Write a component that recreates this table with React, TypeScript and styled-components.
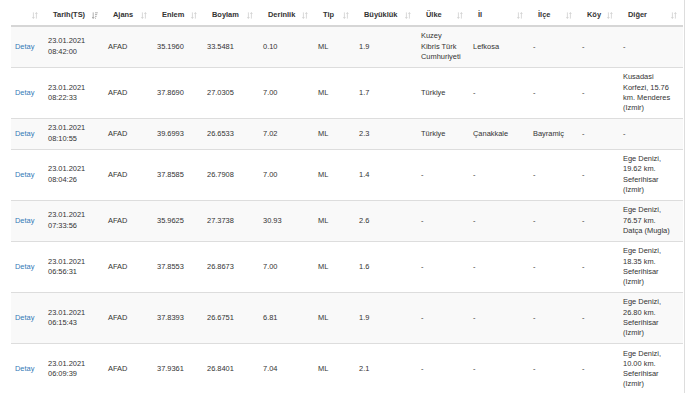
import React from 'react';
import styled, { createGlobalStyle } from 'styled-components';

const GlobalStyle = createGlobalStyle`
  html, body {
    margin: 0;
    padding: 0;
    background: #ffffff;
    overflow: hidden;
  }
  body {
    font-family: 'Liberation Sans', Arial, sans-serif;
    color: #333333;
  }
`;

const Panel = styled.div`
  box-sizing: border-box;
  width: 685px;
  height: 393px;
  padding: 6px 0 0 11px;
  border-right: 1px solid #dddddd;
  overflow: hidden;
`;

const Table = styled.table`
  width: 672px;
  table-layout: fixed;
  border-collapse: collapse;
  border-spacing: 0;
  font-size: 7.45px;
  line-height: 10.25px;
`;

const HeadCell = styled.th`
  padding: 4px 6px 4.5px 9px;
  border-bottom: 2px solid #d6d6d6;
  text-align: left;
  font-weight: bold;
  vertical-align: middle;
  white-space: nowrap;
`;

const HeadInner = styled.div`
  display: flex;
  align-items: center;
  justify-content: space-between;
  gap: 4px;
`;

const Row = styled.tr<{ $striped: boolean }>`
  background: ${(p) => (p.$striped ? '#f9f9f9' : '#ffffff')};
`;

const Cell = styled.td`
  padding: 4.6px 4px;
  border-top: 1px solid #dddddd;
  vertical-align: middle;
  white-space: nowrap;
  overflow: hidden;
`;

const DetailLink = styled.a`
  color: #337ab7;
  text-decoration: none;
`;

const SortIcon = styled.svg`
  flex: none;
  display: block;
`;

interface SortProps {
  active?: boolean;
}

const Sort: React.FC<SortProps> = ({ active }) =>
  active ? (
    <SortIcon width="6" height="7" viewBox="0 0 6 7">
      <g fill="none" stroke="#9a9a9a" strokeWidth="0.8">
        <path d="M1.2 0.4v6M0.2 5l1 1.4 1-1.4" />
        <path d="M3 0.8h2.8M3 2.6h2.2M3 4.4h1.6M3 6.2h1" />
      </g>
    </SortIcon>
  ) : (
    <SortIcon width="6" height="7" viewBox="0 0 6 7">
      <g fill="none" stroke="#cfcfcf" strokeWidth="0.8">
        <path d="M1.4 0.4v6M0.4 5l1 1.4 1-1.4" />
        <path d="M4.4 6.6v-6M3.4 2l1-1.4 1 1.4" />
      </g>
    </SortIcon>
  );

const columns: { title: string; width: number; active?: boolean }[] = [
  { title: '', width: 33 },
  { title: 'Tarih(TS)', width: 60, active: true },
  { title: 'Ajans', width: 49 },
  { title: 'Enlem', width: 50 },
  { title: 'Boylam', width: 56 },
  { title: 'Derinlik', width: 55 },
  { title: 'Tip', width: 41 },
  { title: 'Büyüklük', width: 62 },
  { title: 'Ülke', width: 52 },
  { title: 'İl', width: 60 },
  { title: 'İlçe', width: 49 },
  { title: 'Köy', width: 41 },
  { title: 'Diğer', width: 64 },
];

type Quake = {
  date: string;
  time: string;
  lat: string;
  lon: string;
  depth: string;
  mag: string;
  country: string[];
  city: string;
  town: string;
  village: string;
  other: string[];
};

const seferihisar = (km: string) => ['Ege Denizi,', `${km} km.`, 'Seferihisar', '(Izmir)'];

const quakes: Quake[] = [
  { date: '23.01.2021', time: '08:42:00', lat: '35.1960', lon: '33.5481', depth: '0.10', mag: '1.9', country: ['Kuzey', 'Kibris Türk', 'Cumhuriyeti'], city: 'Lefkosa', town: '-', village: '-', other: ['-'] },
  { date: '23.01.2021', time: '08:22:33', lat: '37.8690', lon: '27.0305', depth: '7.00', mag: '1.7', country: ['Türkiye'], city: '-', town: '-', village: '-', other: ['Kusadasi', 'Korfezi, 15.76', 'km. Menderes', '(Izmir)'] },
  { date: '23.01.2021', time: '08:10:55', lat: '39.6993', lon: '26.6533', depth: '7.02', mag: '2.3', country: ['Türkiye'], city: 'Çanakkale', town: 'Bayramiç', village: '-', other: ['-'] },
  { date: '23.01.2021', time: '08:04:26', lat: '37.8585', lon: '26.7908', depth: '7.00', mag: '1.4', country: ['-'], city: '-', town: '-', village: '-', other: seferihisar('19.62') },
  { date: '23.01.2021', time: '07:33:56', lat: '35.9625', lon: '27.3738', depth: '30.93', mag: '2.6', country: ['-'], city: '-', town: '-', village: '-', other: ['Ege Denizi,', '76.57 km.', 'Datça (Mugla)'] },
  { date: '23.01.2021', time: '06:56:31', lat: '37.8553', lon: '26.8673', depth: '7.00', mag: '1.6', country: ['-'], city: '-', town: '-', village: '-', other: seferihisar('18.35') },
  { date: '23.01.2021', time: '06:15:43', lat: '37.8393', lon: '26.6751', depth: '6.81', mag: '1.9', country: ['-'], city: '-', town: '-', village: '-', other: seferihisar('26.80') },
  { date: '23.01.2021', time: '06:09:39', lat: '37.9361', lon: '26.8401', depth: '7.04', mag: '2.1', country: ['-'], city: '-', town: '-', village: '-', other: seferihisar('10.00') },
];

const Lines: React.FC<{ lines: string[] }> = ({ lines }) => (
  <>
    {lines.map((line, i) => (
      <React.Fragment key={i}>
        {i > 0 && <br />}
        {line}
      </React.Fragment>
    ))}
  </>
);

export default function App() {
  return (
    <>
      <GlobalStyle />
      <Panel>
        <Table>
          <colgroup>
            {columns.map((c, i) => (
              <col key={i} style={{ width: c.width }} />
            ))}
          </colgroup>
          <thead>
            <tr>
              {columns.map((c, i) => (
                <HeadCell key={i}>
                  <HeadInner>
                    <span>{c.title}</span>
                    <Sort active={c.active} />
                  </HeadInner>
                </HeadCell>
              ))}
            </tr>
          </thead>
          <tbody>
            {quakes.map((q, i) => (
              <Row key={q.time} $striped={i % 2 === 0}>
                <Cell>
                  <DetailLink href="#">Detay</DetailLink>
                </Cell>
                <Cell>
                  <Lines lines={[q.date, q.time]} />
                </Cell>
                <Cell>AFAD</Cell>
                <Cell>{q.lat}</Cell>
                <Cell>{q.lon}</Cell>
                <Cell>{q.depth}</Cell>
                <Cell>ML</Cell>
                <Cell>{q.mag}</Cell>
                <Cell>
                  <Lines lines={q.country} />
                </Cell>
                <Cell>{q.city}</Cell>
                <Cell>{q.town}</Cell>
                <Cell>{q.village}</Cell>
                <Cell>
                  <Lines lines={q.other} />
                </Cell>
              </Row>
            ))}
          </tbody>
        </Table>
      </Panel>
    </>
  );
}
